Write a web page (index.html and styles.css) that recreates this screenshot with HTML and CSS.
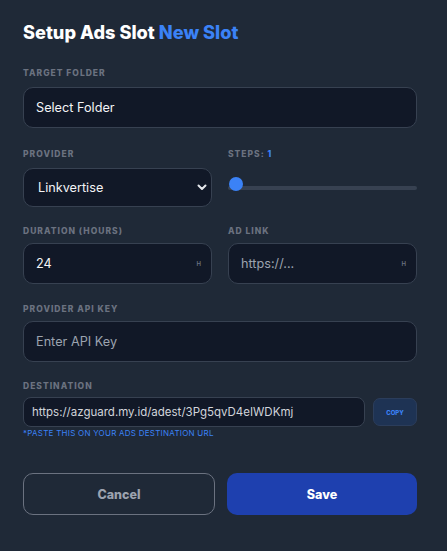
FILE: index.html
```html
<!DOCTYPE html>
<html>
<head>
<meta charset="utf-8">
<link rel="stylesheet" href="styles.css">
</head>
<body>
<div class="modal">
  <h1 class="title">Setup Ads Slot <span class="accent">New Slot</span></h1>

  <div class="field f-target">
    <div class="label">Target Folder</div>
    <div class="input"><span class="value">Select Folder</span></div>
  </div>

  <div class="row r-provider">
    <div class="field">
      <div class="label">Provider</div>
      <div class="input select">
        <span class="value">Linkvertise</span>
        <svg class="chev" width="10" height="7" viewBox="0 0 10 7"><path d="M1.5 1.5 L5 5 L8.5 1.5" fill="none" stroke="#e5e7eb" stroke-width="2" stroke-linecap="round" stroke-linejoin="round"/></svg>
      </div>
    </div>
    <div class="field">
      <div class="label">Steps: <span class="accent-num">1</span></div>
      <div class="slider"><div class="track"></div><div class="thumb"></div></div>
    </div>
  </div>

  <div class="row r-duration">
    <div class="field tight">
      <div class="label">Duration (Hours)</div>
      <div class="input"><span class="value">24</span><span class="suffix">H</span></div>
    </div>
    <div class="field tight">
      <div class="label">Ad Link</div>
      <div class="input"><span class="placeholder">https://...</span><span class="suffix">H</span></div>
    </div>
  </div>

  <div class="field tight f-api">
    <div class="label">Provider API Key</div>
    <div class="input"><span class="placeholder">Enter API Key</span></div>
  </div>

  <div class="field dest-field">
    <div class="label">Destination</div>
    <div class="dest-row">
      <div class="input small"><span class="url">https://azguard.my.id/adest/3Pg5qvD4eIWDKmj</span></div>
      <div class="copy">COPY</div>
    </div>
    <div class="hint">*Paste this on your ads destination url</div>
  </div>

  <div class="actions">
    <div class="btn cancel">Cancel</div>
    <div class="btn save">Save</div>
  </div>
</div>
</body>
</html>
```

FILE: styles.css
```css
* { box-sizing: border-box; }
html, body { margin: 0; padding: 0; }
body {
  background: #1f2937;
  font-family: Inter, "Noto Sans", sans-serif;
  color: #f3f4f6;
  width: 447px;
  height: 551px;
  overflow: hidden;
}
.modal {
  width: 394px;
  margin-left: 23px;
  padding-top: 20px;
  display: flex;
  flex-direction: column;
}
.title {
  margin: 0;
  font-size: 18.2px;
  line-height: 24px;
  font-weight: 800;
  color: #ffffff;
  letter-spacing: 0;
}
.accent { color: #3b82f6; }
.field { display: flex; flex-direction: column; gap: 9px; }
.field.tight { gap: 7px; }
.f-target { margin-top: 24px; }
.r-provider { margin-top: 21px; }
.r-duration { margin-top: 19px; }
.f-api { margin-top: 20px; }
.label {
  font-size: 8.5px;
  line-height: 10px;
  font-weight: 800;
  letter-spacing: 1px;
  text-transform: uppercase;
  color: #6b7280;
}
.accent-num { color: #3b82f6; }
.row {
  display: grid;
  grid-template-columns: 1fr 1fr;
  column-gap: 16px;
}
.input {
  height: 41px;
  background: #111827;
  border: 1px solid #374151;
  border-radius: 10px;
  display: flex;
  align-items: center;
  padding: 0 10px 0 12px;
  font-size: 12.7px;
}
.value { color: #f3f4f6; flex: 1; }
.placeholder { color: #9ca3af; flex: 1; }
.suffix { font-size: 6px; color: #6b7280; font-weight: 600; }
.select { height: 39px; padding: 0 4px 0 14px; }
.chev { display: block; }
.slider {
  position: relative;
  height: 39px;
  display: flex;
  align-items: center;
}
.track {
  width: 100%;
  height: 4px;
  background: #374151;
  border-radius: 2px;
}
.thumb {
  position: absolute;
  left: 1px;
  top: 9px;
  width: 14px;
  height: 14px;
  border-radius: 50%;
  background: #3b82f6;
}
.dest-field { margin-top: 19px; gap: 6px; }
.dest-row { display: flex; gap: 8px; }
.input.small {
  flex: 1;
  height: 30px;
  border-radius: 8px;
  padding: 0 8px;
}
.url { font-size: 11.5px; color: #d1d5db; white-space: nowrap; }
.copy {
  width: 44px;
  height: 28px;
  margin-top: 1px;
  border-radius: 7px;
  background: #1e3354;
  border: 1px solid #2b3d5b;
  color: #3b82f6;
  font-size: 6px;
  font-weight: 800;
  display: flex;
  align-items: center;
  justify-content: center;
}
.hint {
  margin-top: -4px;
  font-size: 8px;
  line-height: 9px;
  letter-spacing: 0.25px;
  color: #3b82f6;
  text-transform: uppercase;
}
.actions {
  margin-top: 35px;
  display: grid;
  grid-template-columns: 192px 1fr;
  column-gap: 12px;
}
.btn {
  height: 42px;
  border-radius: 10px;
  display: flex;
  align-items: center;
  justify-content: center;
  font-size: 12.5px;
  font-weight: 800;
}
.cancel {
  border: 1px solid #6b7280;
  color: #9ca3af;
}
.save {
  background: #1e40af;
  color: #ffffff;
}
```
